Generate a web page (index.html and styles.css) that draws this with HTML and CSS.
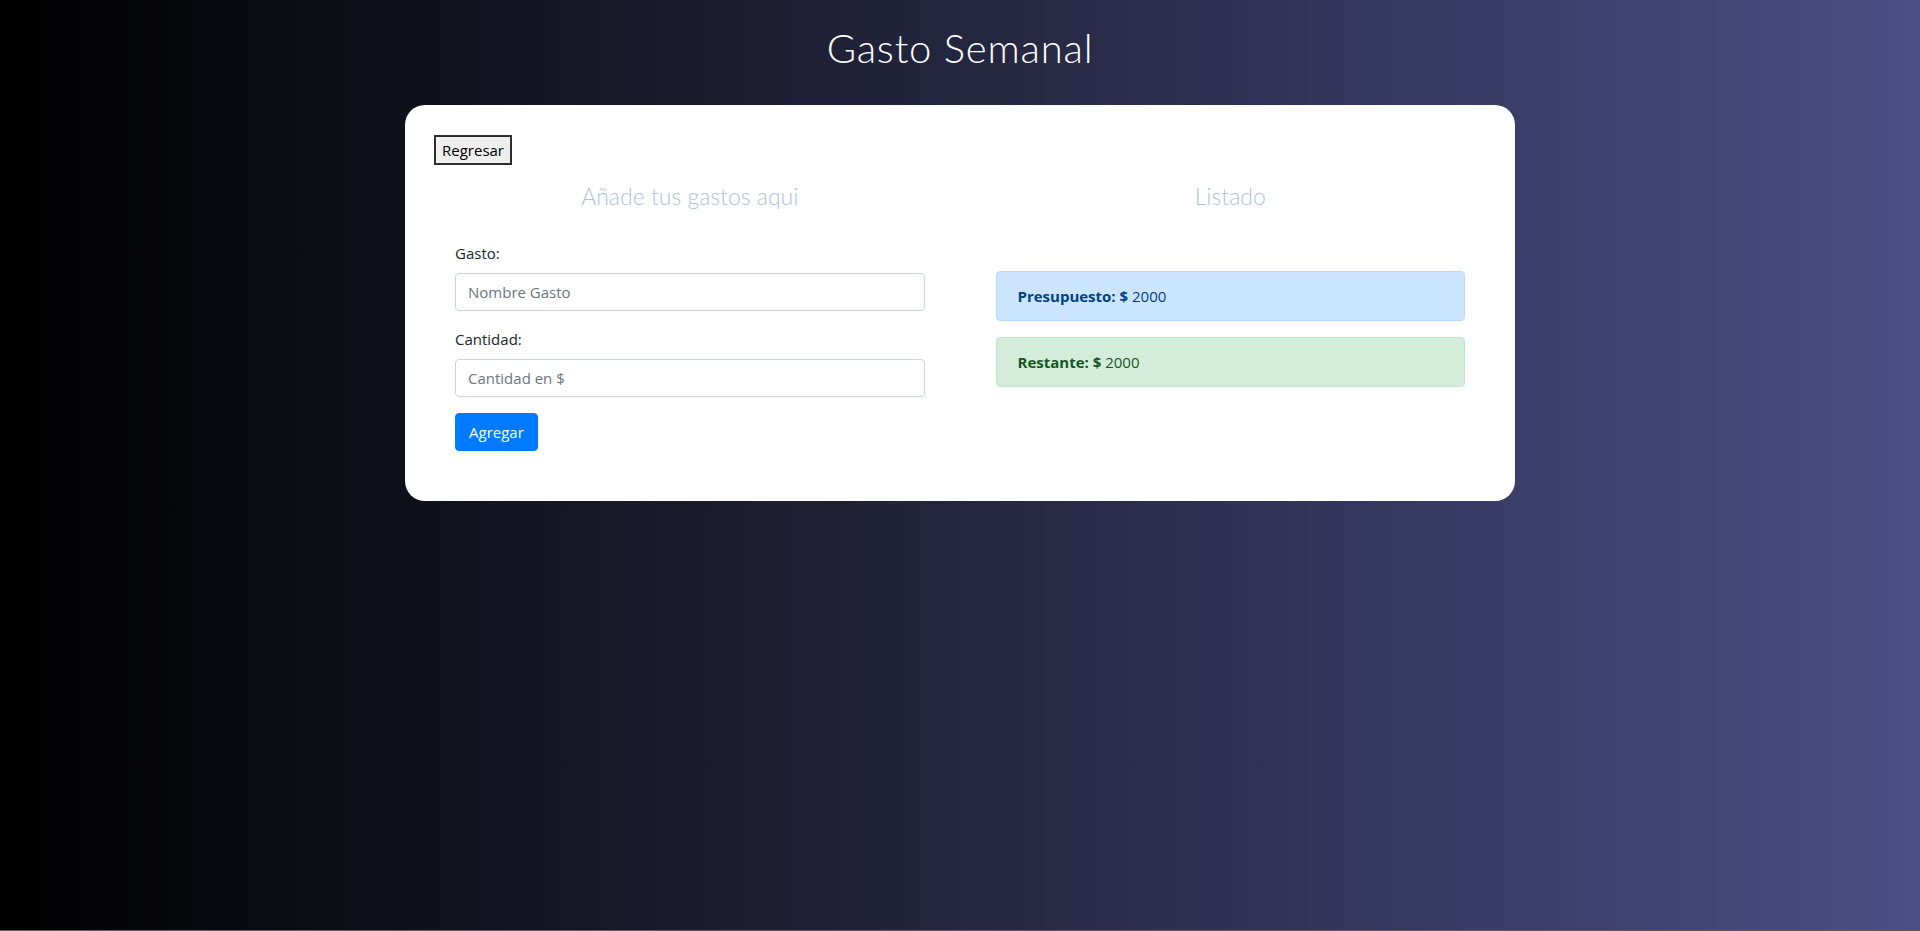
FILE: index.html
```html
<!DOCTYPE html>
<html lang="es">
<head>
<meta charset="utf-8">
<title>Gasto Semanal</title>
<link rel="stylesheet" href="styles.css">
</head>
<body>
<header class="header">
  <h1 class="title">Gasto Semanal</h1>
</header>
<main class="card">
  <button class="back-btn" type="button">Regresar</button>
  <div class="columns">
    <section class="col">
      <h2 class="col-title">Añade tus gastos aqui</h2>
      <form class="form">
        <div class="form-group">
          <label class="label" for="gasto">Gasto:</label>
          <input class="input" id="gasto" type="text" placeholder="Nombre Gasto">
        </div>
        <div class="form-group">
          <label class="label" for="cantidad">Cantidad:</label>
          <input class="input" id="cantidad" type="text" placeholder="Cantidad en $">
        </div>
        <button class="btn-primary" type="button">Agregar</button>
      </form>
    </section>
    <section class="col">
      <h2 class="col-title">Listado</h2>
      <div class="alerts">
        <div class="alert alert-primary"><strong>Presupuesto: $</strong> 2000</div>
        <div class="alert alert-success"><strong>Restante: $</strong> 2000</div>
      </div>
    </section>
  </div>
</main>
</body>
</html>
```

FILE: styles.css
```css
html {
  background: #5c5c5c;
}
body {
  margin: 0;
  min-height: calc(100vh - 1px);
  background: linear-gradient(to right, #000000 0%, #24263f 50%, #4b4f84 100%);
  font-family: "Open Sans", "Noto Sans", sans-serif;
  color: #212529;
  font-size: 16px;
  line-height: 24px;
}
.header {
  padding-top: 24px;
  text-align: center;
}
.title {
  margin: 0;
  font-family: Lato, "Open Sans", sans-serif;
  font-weight: 300;
  font-size: 40px;
  line-height: 48px;
  color: #ffffff;
  letter-spacing: 0.8px;
}
.card {
  box-sizing: border-box;
  width: 1110px;
  margin: 33px auto 0;
  background: #ffffff;
  border-radius: 20px;
  padding: 30px 28px 50px 29px;
}
.back-btn {
  display: block;
  font-family: "Open Sans", sans-serif;
  font-size: 15px;
  line-height: 24px;
  padding: 1px 6px;
  color: #000;
  background: #efefef;
  border: 2px solid #2e2e2e;
  border-radius: 0;
}
.columns {
  display: grid;
  grid-template-columns: 1fr 1fr;
  column-gap: 71px;
  padding: 0 22px 0 21px;
  margin-top: 17px;
}
.col-title {
  margin: 0;
  text-align: center;
  font-family: Lato, "Open Sans", sans-serif;
  font-weight: 300;
  font-size: 23px;
  line-height: 29px;
  color: #adbfe2;
}
.form {
  margin-top: 30px;
}
.form-group {
  margin-bottom: 16px;
}
.label {
  display: block;
  margin-bottom: 8px;
  font-size: 15px;
}
.input {
  display: block;
  box-sizing: border-box;
  width: 100%;
  height: 38px;
  padding: 6px 12px;
  font-family: "Open Sans", sans-serif;
  font-size: 15px;
  color: #495057;
  background: #fff;
  border: 1px solid #ced4da;
  border-radius: 4px;
}
.input::placeholder {
  color: #6c757d;
}
.btn-primary {
  display: block;
  height: 38px;
  padding: 6px 13px;
  font-family: "Open Sans", sans-serif;
  font-size: 15px;
  line-height: 24px;
  color: #fff;
  background: #007bff;
  border: 1px solid #007bff;
  border-radius: 4px;
}
.alerts {
  margin-top: 60px;
  display: flex;
  flex-direction: column;
  gap: 16px;
}
.alert {
  box-sizing: border-box;
  height: 50px;
  padding: 12px 21px;
  border: 1px solid transparent;
  border-radius: 4px;
  font-size: 15px;
}
.alert strong {
  font-weight: 700;
}
.alert-primary {
  color: #004085;
  background: #cce5ff;
  border-color: #b8daff;
}
.alert-success {
  color: #155724;
  background: #d4edda;
  border-color: #c3e6cb;
}
```
